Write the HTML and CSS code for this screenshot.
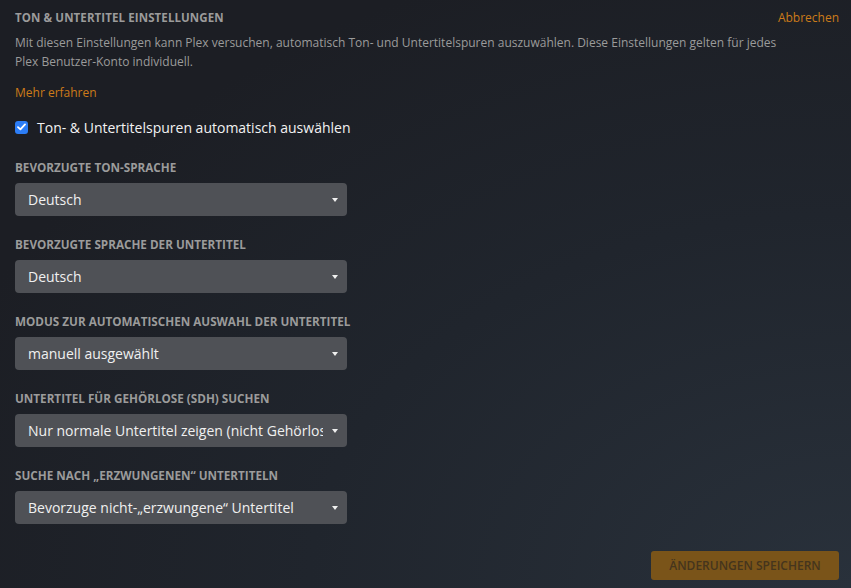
FILE: index.html
```html
<!DOCTYPE html>
<html lang="de">

<head>
    <meta charset="UTF-8">
    <meta name="viewport" content="width=device-width, initial-scale=1.0">
    <title>Ton & Untertitel Einstellungen</title>
    <link rel="stylesheet" href="styles.css">
</head>

<body>
    <div class="page">
        <div class="header">
            <h2 class="heading">Ton &amp; Untertitel Einstellungen</h2>
            <a class="cancel" href="#">Abbrechen</a>
        </div>
        <p class="desc">Mit diesen Einstellungen kann Plex versuchen, automatisch Ton- und Untertitelspuren auszuwählen. Diese Einstellungen gelten für jedes Plex Benutzer-Konto individuell.</p>
        <a class="more" href="#">Mehr erfahren</a>

        <label class="check">
            <span class="box">
                <svg width="9" height="8" viewBox="0 0 9 8"><path d="M1 4.2 L3.4 6.4 L8 1.4" fill="none" stroke="#fff" stroke-width="1.8" stroke-linecap="round" stroke-linejoin="round"/></svg>
            </span>
            Ton- &amp; Untertitelspuren automatisch auswählen
        </label>

        <div class="field">
            <div class="label">Bevorzugte Ton-Sprache</div>
            <div class="select"><span>Deutsch</span><i class="arrow"></i></div>
        </div>
        <div class="field">
            <div class="label">Bevorzugte Sprache der Untertitel</div>
            <div class="select"><span>Deutsch</span><i class="arrow"></i></div>
        </div>
        <div class="field">
            <div class="label">Modus zur automatischen Auswahl der Untertitel</div>
            <div class="select"><span>manuell ausgewählt</span><i class="arrow"></i></div>
        </div>
        <div class="field">
            <div class="label">Untertitel für Gehörlose (SDH) suchen</div>
            <div class="select"><span>Nur normale Untertitel zeigen (nicht Gehörlose)</span><i class="arrow"></i></div>
        </div>
        <div class="field">
            <div class="label">Suche nach „erzwungenen“ Untertiteln</div>
            <div class="select"><span>Bevorzuge nicht-„erzwungene“ Untertitel</span><i class="arrow"></i></div>
        </div>

        <div class="footer">
            <button class="save">Änderungen speichern</button>
        </div>
    </div>
</body>

</html>
```

FILE: styles.css
```css
html,
body {
    margin: 0;
    padding: 0;
    height: 100%;
}

body {
    font-family: "Open Sans", "Noto Sans", sans-serif;
    background: radial-gradient(ellipse at 100% 100%, #29313b 0%, #20252d 45%, #1c1e24 80%);
    background-color: #1c1e24;
    color: #eee;
}

.page {
    box-sizing: border-box;
    height: 588px;
    padding: 7px 12px 8px 15px;
    display: flex;
    flex-direction: column;
}

.header {
    display: flex;
    justify-content: space-between;
    align-items: center;
    height: 20px;
}

.heading {
    margin: 0;
    font-size: 11.5px;
    font-weight: 700;
    text-transform: uppercase;
    color: #9b9b9b;
    letter-spacing: 0.1px;
}

.cancel {
    color: #cc7b19;
    font-size: 12px;
    text-decoration: none;
}

.desc {
    margin: 6px 0 0 0;
    max-width: 780px;
    font-size: 12px;
    line-height: 19px;
    color: #9b9b9b;
}

.more {
    margin-top: 12px;
    align-self: flex-start;
    font-size: 12px;
    line-height: 19px;
    color: #cc7b19;
    text-decoration: none;
}

.check {
    display: flex;
    align-items: center;
    margin-top: 15px;
    height: 20px;
    font-size: 14px;
    color: #f2f2f2;
}

.box {
    width: 13px;
    height: 13px;
    border-radius: 3px;
    background-color: #2c7df6;
    display: flex;
    align-items: center;
    justify-content: center;
    margin-right: 9px;
}

.field {
    margin-top: 22px;
}

.field + .field {
    margin-top: 20px;
}

.label {
    height: 16px;
    line-height: 16px;
    font-size: 11.7px;
    font-weight: 700;
    text-transform: uppercase;
    color: #9b9b9b;
}

.select {
    position: relative;
    box-sizing: border-box;
    margin-top: 8px;
    width: 332px;
    height: 33px;
    padding: 0 24px 0 13px;
    border-radius: 4px;
    background-color: #4f5156;
    display: flex;
    align-items: center;
    overflow: hidden;
    white-space: nowrap;
    font-size: 14px;
    color: #f0f0f0;
}

.select span {
    overflow: hidden;
}

.arrow {
    position: absolute;
    right: 9px;
    top: 15px;
    width: 0;
    height: 0;
    border-left: 3.5px solid transparent;
    border-right: 3.5px solid transparent;
    border-top: 4px solid #f0f0f0;
}

.footer {
    margin-top: auto;
    display: flex;
    justify-content: flex-end;
}

.save {
    width: 188px;
    height: 29px;
    border: none;
    border-radius: 3px;
    background-color: #7a5419;
    color: #45351d;
    font-family: "Open Sans", "Noto Sans", sans-serif;
    font-size: 12px;
    font-weight: 600;
    text-transform: uppercase;
}
```
